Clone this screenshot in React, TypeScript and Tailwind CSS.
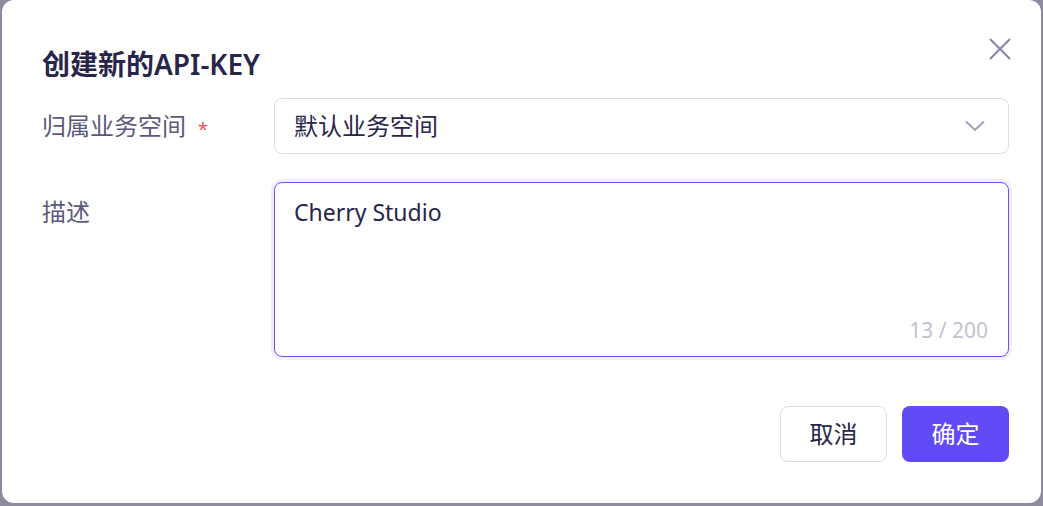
import React from "react";

function CloseIcon() {
	return (
		<svg width="22" height="22" viewBox="0 0 22 22" fill="none" stroke="#8584a8" strokeWidth="2">
			<path d="M1 1 L21 21 M21 1 L1 21" />
		</svg>
	);
}

function ChevronDown() {
	return (
		<svg width="20" height="12" viewBox="0 0 20 12" fill="none" stroke="#9d9cb8" strokeWidth="1.8">
			<path d="M1 1.5 L10 10 L19 1.5" />
		</svg>
	);
}

export default function App() {
	return (
		<div className="h-[506px] w-[1043px] overflow-hidden bg-[#8d8b9f] pl-[2px] font-['Noto_Sans','Noto_Sans_CJK_SC',sans-serif]">
			<div className="relative h-[503px] w-[1039px] rounded-[12px] bg-white pl-[40px] pr-[32px] pt-[46px]">
				<h1 className="h-[36px] text-[28px] font-semibold leading-[36px] text-[#27254a]">创建新的API-KEY</h1>
				<button className="absolute right-[30px] top-[38px]">
					<CloseIcon />
				</button>

				<div className="mt-[16px] flex items-center">
					<div className="flex w-[232px] items-center text-[24px] leading-[32px] text-[#5c5a7c]">
						归属业务空间
						<span className="ml-[12px] mt-[6px] text-[18px] text-[#e8524f]">*</span>
					</div>
					<div className="flex h-[56px] flex-1 items-center justify-between rounded-[8px] border border-[#dcdbe8] pl-[19px] pr-[23px] text-[24px] text-[#27254a]">
						<span>默认业务空间</span>
						<ChevronDown />
					</div>
				</div>

				<div className="mt-[28px] flex items-start">
					<div className="mt-[14px] w-[232px] text-[24px] leading-[32px] text-[#5c5a7c]">描述</div>
					<div className="relative h-[175px] flex-1 rounded-[8px] border border-[#6a50f7] pl-[19px] pt-[13px] text-[23px] leading-[32px] text-[#27254a] shadow-[0_0_0_3px_#f0eeff]">
						Cherry Studio
						<span className="absolute bottom-[10px] right-[20px] text-[21px] text-[#c3c2d3]">13 / 200</span>
					</div>
				</div>

				<div className="mt-[49px] flex justify-end gap-[15px]">
					<button className="h-[56px] w-[107px] rounded-[8px] border border-[#dcdbe8] bg-white text-[24px] text-[#27254a]">取消</button>
					<button className="h-[56px] w-[107px] rounded-[8px] bg-[#614bf6] text-[24px] text-white">确定</button>
				</div>
			</div>
		</div>
	);
}
